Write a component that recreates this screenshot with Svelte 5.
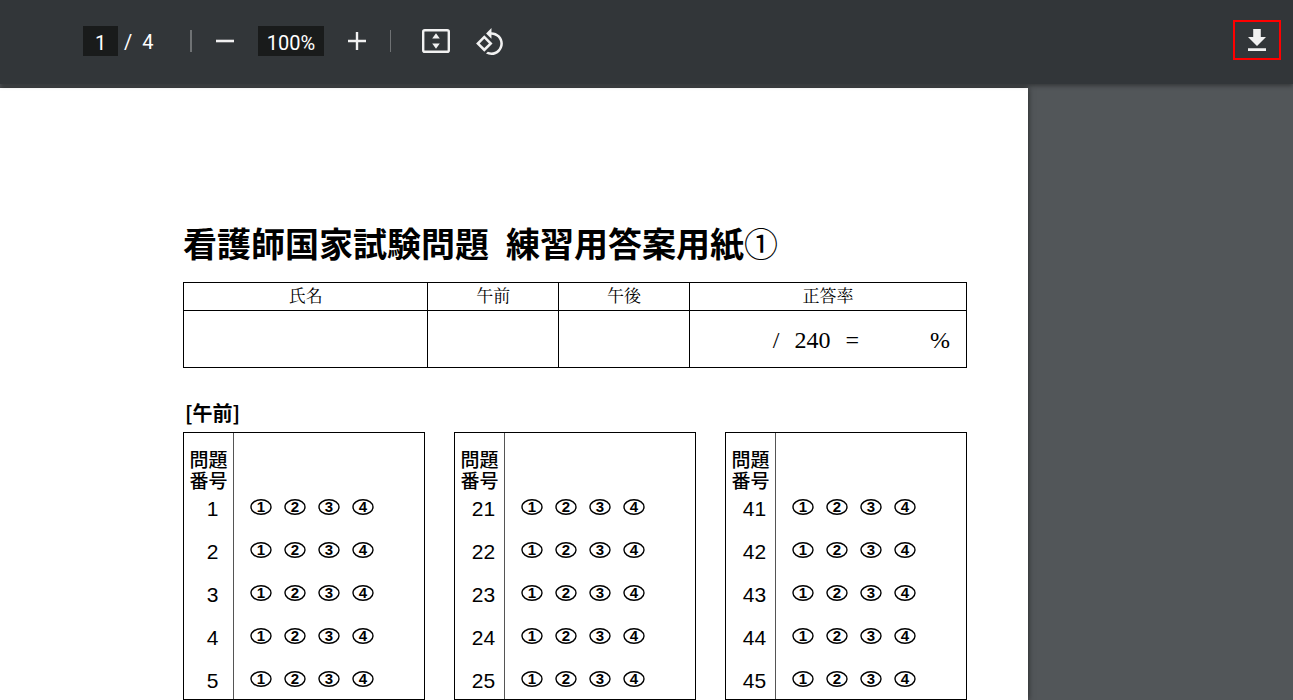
<script lang="ts">
    let page = "1";
    let zoom = "100%";

    const total_pages = 4;
    const rows_shown = 5;
    const choices = [1, 2, 3, 4];
    const column_starts = [1, 21, 41];

    const numbersFrom = (start: number) => {
        return Array.from({ length: rows_shown }, (_, i) => start + i);
    }
</script>

<div class="viewer">
    <header class="toolbar">
        <div class="controls">
            <div class="pages">
                <input class="field page-input" type="text" aria-label="ページ番号" bind:value={page}/>
                <span class="slash">/</span>
                <span class="total">{total_pages}</span>
            </div>
            <span class="divider wide"></span>
            <button class="icon-btn" aria-label="縮小">
                <svg width="18" height="18" viewBox="0 0 18 18"><path d="M0 7.7h18v2.6H0z"/></svg>
            </button>
            <input class="field zoom-input" type="text" aria-label="ズーム" bind:value={zoom}/>
            <button class="icon-btn" aria-label="拡大">
                <svg width="18" height="18" viewBox="0 0 18 18"><path d="M7.8 0h2.4v7.8H18v2.4h-7.8V18H7.8v-7.8H0V7.8h7.8z"/></svg>
            </button>
            <span class="divider"></span>
            <button class="icon-btn fit" aria-label="ページに合わせる">
                <svg width="28" height="24" viewBox="0 0 28 24">
                    <rect x="1.2" y="1.2" width="25.6" height="21.6" rx="1.6" fill="none" stroke="#f1f1f1" stroke-width="2.4"/>
                    <path d="M14 4.2l3.8 5.2h-7.6zM14 19.8l3.8-5.2h-7.6z"/>
                </svg>
            </button>
            <button class="icon-btn rotate" aria-label="回転">
                <svg width="27" height="27" viewBox="0.8 0.7 21.3 21.3"><path d="M7.34 6.41L.86 12.9l6.49 6.48 6.49-6.48-6.5-6.49zM3.69 12.9l3.66-3.66L11 12.9l-3.66 3.66-3.65-3.66zm15.67-6.26C17.61 4.88 15.3 4 13 4V.76L8.76 5 13 9.24V6c1.79 0 3.58.68 4.95 2.05 2.73 2.73 2.73 7.17 0 9.9C16.58 19.32 14.79 20 13 20c-.97 0-1.94-.21-2.84-.61l-1.49 1.49C10.02 21.62 11.51 22 13 22c2.3 0 4.61-.88 6.36-2.64 3.52-3.51 3.52-9.21 0-12.72z"/></svg>
            </button>
        </div>
        <button class="icon-btn download" aria-label="ダウンロード">
            <svg width="18" height="22" viewBox="0 0 18 22"><path d="M5.2 0h7.6v8H18l-9 9-9-9h5.2zM0 19.2h18V22H0z"/></svg>
        </button>
    </header>

    <main class="sheet">
        <h1><span>看護師国家試験問題</span><span>練習用答案用紙<span class="circled">①</span></span></h1>

        <table class="score">
            <colgroup>
                <col class="name-col"/>
                <col class="part-col"/>
                <col class="part-col"/>
                <col/>
            </colgroup>
            <thead>
                <tr>
                    <th>氏名</th>
                    <th>午前</th>
                    <th>午後</th>
                    <th>正答率</th>
                </tr>
            </thead>
            <tbody>
                <tr>
                    <td></td>
                    <td></td>
                    <td></td>
                    <td>
                        <div class="rate">
                            <span>/</span>
                            <span>240</span>
                            <span>=</span>
                            <span class="percent">%</span>
                        </div>
                    </td>
                </tr>
            </tbody>
        </table>

        <h2>[午前]</h2>

        <div class="answers">
            {#each column_starts as start (start)}
                <table class="answer-box">
                    <thead>
                        <tr>
                            <th>問題<br/>番号</th>
                            <td></td>
                        </tr>
                    </thead>
                    <tbody>
                        {#each numbersFrom(start) as number (number)}
                            <tr>
                                <th class="number">{number}</th>
                                <td>
                                    <div class="choices">
                                        {#each choices as choice}
                                            <svg class="bubble" width="22" height="16" viewBox="0 0 22 16">
                                                <ellipse cx="11" cy="8" rx="10" ry="7.2"/>
                                                <text x="11" y="13">{choice}</text>
                                            </svg>
                                        {/each}
                                    </div>
                                </td>
                            </tr>
                        {/each}
                    </tbody>
                </table>
            {/each}
        </div>
    </main>
</div>

<style>
    :global(body) {
        margin: 0;
        background-color: #525659;
    }

    .viewer {
        display: flex;
        flex-direction: column;
        min-height: 100vh;
        box-sizing: border-box;
        background-color: #525659;
        font-family: "Noto Sans CJK JP", sans-serif;
    }

    .toolbar {
        display: flex;
        align-items: flex-start;
        justify-content: space-between;
        padding: 20px 12px 24px 83px;
        background-color: #323639;
        box-shadow: 0 2px 4px rgba(0, 0, 0, 0.35);
        color: #fff;
        font-family: Roboto, sans-serif;
        font-size: 20px;
        z-index: 1;
    }

    .controls {
        display: flex;
        align-items: center;
        height: 42px;
        gap: 24px;
        margin-bottom: -2px;
    }

    .pages {
        display: flex;
        align-items: center;
        width: 107px;
        margin-right: -24px;
    }

    .slash,
    .total {
        padding-top: 2px;
    }

    .slash {
        margin: 0 10px 0 6px;
    }

    .field {
        height: 30px;
        box-sizing: border-box;
        padding: 3px 0 0;
        border: none;
        background-color: #191b1b;
        color: #fff;
        font: inherit;
        text-align: center;
    }

    .page-input {
        width: 35px;
    }

    .zoom-input {
        width: 66px;
    }

    .divider {
        width: 1px;
        height: 22px;
        background-color: #6f7274;
    }

    .divider.wide {
        width: 2px;
    }

    .icon-btn {
        display: flex;
        padding: 0;
        border: none;
        background: none;
        cursor: pointer;
    }

    .icon-btn svg {
        fill: #f1f1f1;
    }

    .fit {
        margin-left: 7px;
    }

    .rotate {
        margin-left: 2px;
    }

    .download {
        align-items: center;
        justify-content: center;
        width: 48px;
        height: 40px;
        border: 2px solid #f00;
    }

    .sheet {
        flex: 1;
        margin: 4px 265px 0 0;
        padding: 135px 61px 0 183px;
        background-color: #fff;
        box-shadow: 0 0 6px rgba(0, 0, 0, 0.6);
        color: #000;
    }

    h1 {
        display: flex;
        gap: 17px;
        margin: 0;
        font-size: 34px;
        font-weight: 700;
        line-height: 40px;
        white-space: nowrap;
    }

    .circled {
        font-weight: 400;
    }

    .score {
        width: 100%;
        margin-top: 19px;
        border-collapse: collapse;
        table-layout: fixed;
    }

    .name-col {
        width: 31.2%;
    }

    .part-col {
        width: 16.7%;
    }

    .score th,
    .score td {
        padding: 0;
        border: 1px solid #000;
    }

    .score th {
        padding-top: 1px;
        font-family: "Liberation Serif", "Noto Serif CJK JP", "Noto Sans CJK JP", serif;
        font-size: 17px;
        font-weight: 400;
        line-height: 26px;
    }

    .score td {
        height: 56px;
    }

    .rate {
        display: flex;
        gap: 15px;
        padding: 1px 16px 0 83px;
        font-family: "Liberation Serif", serif;
        font-size: 24px;
        line-height: 28px;
    }

    .percent {
        margin-left: auto;
    }

    h2 {
        margin: 33px 0 7px 2px;
        font-size: 20px;
        font-weight: 700;
        line-height: 24px;
    }

    .answers {
        display: grid;
        grid-template-columns: repeat(3, 1fr);
        gap: 29px;
    }

    .answer-box {
        width: 100%;
        border: 1px solid #000;
        border-spacing: 0;
        table-layout: fixed;
    }

    .answer-box th {
        width: 50px;
        box-sizing: border-box;
        padding: 15px 0 6px;
        border-right: 1px solid #555;
        font-size: 19px;
        font-weight: 500;
        line-height: 21px;
    }

    .answer-box td {
        padding: 0 0 21px 16px;
    }

    .answer-box .number {
        padding: 2px 0 19px 8px;
        font-family: "Liberation Sans Narrow", "Liberation Sans", sans-serif;
        font-size: 21px;
        font-weight: 400;
        line-height: 22px;
    }

    .answer-box tbody tr:last-child .number {
        padding-bottom: 7px;
    }

    .answer-box tbody tr:last-child td {
        padding-bottom: 9px;
    }

    .choices {
        display: flex;
        align-items: center;
        gap: 12px;
        height: 22px;
    }

    .bubble ellipse {
        fill: none;
        stroke: #000;
        stroke-width: 1.4;
    }

    .bubble text {
        font-family: "Liberation Sans", sans-serif;
        font-size: 15px;
        font-weight: 700;
        text-anchor: middle;
    }
</style>
